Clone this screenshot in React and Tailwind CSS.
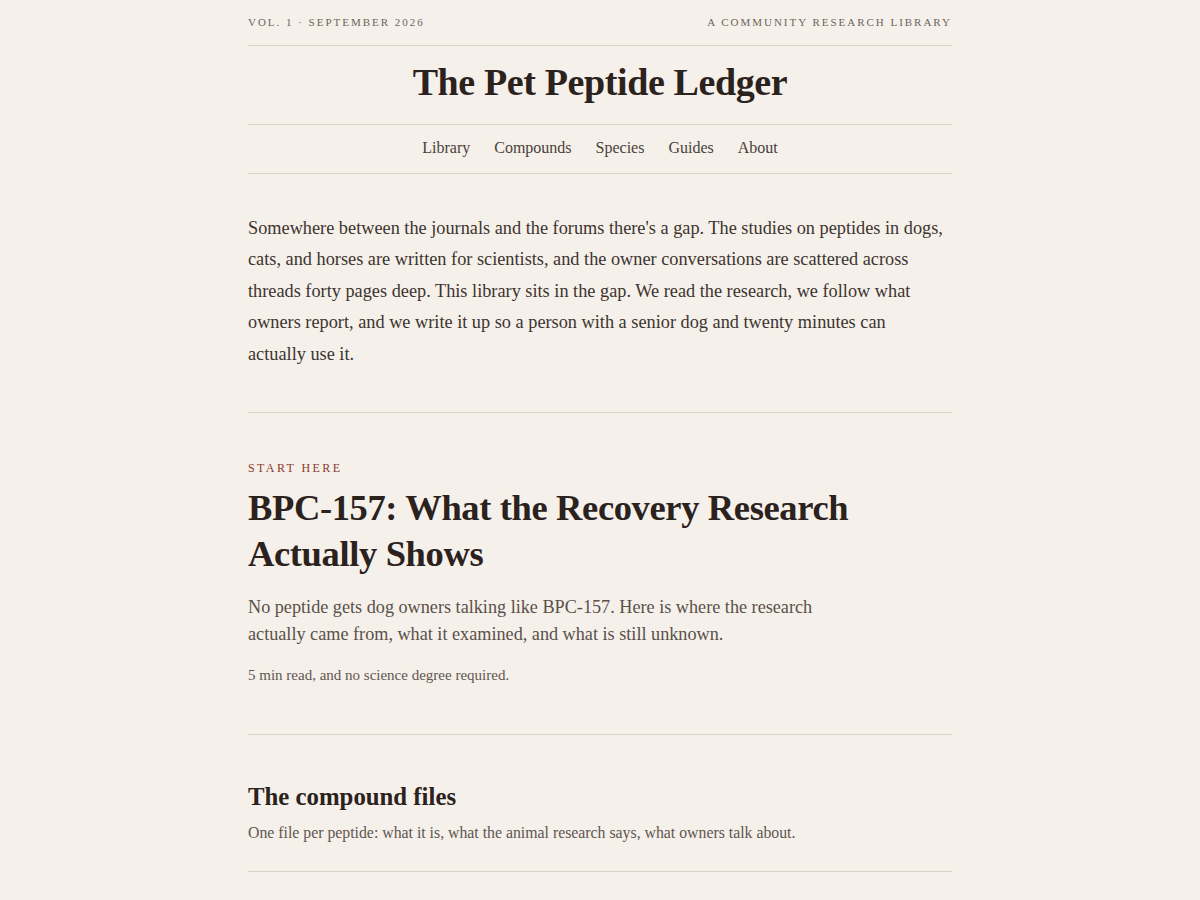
import React from 'react';

const navItems = ['Library', 'Compounds', 'Species', 'Guides', 'About'];

const App = () => {
  return (
    <div className="min-h-screen bg-[#f5f0ea] text-[#2e2520] font-['Liberation_Serif',serif]">
      <div className="mx-auto w-[704px]">
        {/* Masthead */}
        <div className="flex items-center justify-between pt-[14px] pb-[14px] text-[11px] uppercase tracking-[0.18em] text-[#6d645d] border-b border-[#d8d2cb]">
          <span>Vol. 1 · September 2026</span>
          <span>A community research library</span>
        </div>
        <h1 className="pt-[14px] pb-[20px] text-center text-[38px] leading-[44px] font-bold tracking-[-0.01em] text-[#2b221d] border-b border-[#d8d2cb]">
          The Pet Peptide Ledger
        </h1>
        <nav className="flex justify-center gap-6 pt-[12px] pb-[14px] text-[16px] leading-[22px] text-[#4a403a] border-b border-[#d8d2cb]">
          {navItems.map((item) => (
            <a key={item} href="#" className="hover:text-[#8a3b2e]">
              {item}
            </a>
          ))}
        </nav>

        {/* Intro */}
        <section className="pt-[39px] pb-[42px] border-b border-[#d8d2cb]">
          <p className="max-w-[698px] text-[18.3px] leading-[31.5px] text-[#3d3430]">
            Somewhere between the journals and the forums there's a gap. The studies on peptides in dogs, cats, and horses are written for scientists, and the owner conversations are scattered across threads forty pages deep. This library sits in the gap. We read the research, we follow what owners report, and we write it up so a person with a senior dog and twenty minutes can actually use it.
          </p>
        </section>

        {/* Featured */}
        <section className="pt-[46px] pb-[49px] border-b border-[#d8d2cb]">
          <div className="text-[12px] uppercase tracking-[0.2em] text-[#8a3b2e]">Start here</div>
          <h2 className="mt-[8px] max-w-[620px] text-[36.5px] leading-[46px] font-bold tracking-[-0.01em] text-[#2b221d]">
            BPC-157: What the Recovery Research Actually Shows
          </h2>
          <p className="mt-[17px] max-w-[600px] text-[18.2px] leading-[27px] text-[#5a504a]">
            No peptide gets dog owners talking like BPC-157. Here is where the research actually came from, what it examined, and what is still unknown.
          </p>
          <p className="mt-[17px] text-[15px] leading-[20px] text-[#5f5650]">
            5 min read, and no science degree required.
          </p>
        </section>

        {/* Compound files */}
        <section className="pt-[47px] pb-[27px] border-b border-[#d8d2cb]">
          <h3 className="text-[24.8px] leading-[30px] font-bold text-[#2b221d]">The compound files</h3>
          <p className="mt-[10px] text-[15.8px] leading-[22px] text-[#5f5650]">
            One file per peptide: what it is, what the animal research says, what owners talk about.
          </p>
        </section>

        <section className="pt-[26px] pb-[40px]">
          <div className="text-[20px] leading-[26px] font-bold text-[#2b221d]">BPC-157 and tendon healing</div>
        </section>
      </div>
    </div>
  );
};

export default App;
